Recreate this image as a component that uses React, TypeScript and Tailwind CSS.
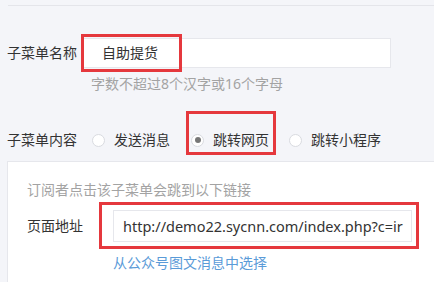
import React from 'react';

const font = { fontFamily: '"Noto Sans", "Noto Sans CJK SC", sans-serif' };

function Radio({ label, checked }: { label: string; checked?: boolean }) {
  return (
    <span className="flex h-5 items-center">
      <span className="flex h-[13px] w-[13px] items-center justify-center rounded-full border border-[#d9dbe0] bg-white">
        {checked && <span className="h-[6px] w-[6px] rounded-full bg-[#777]" />}
      </span>
      <span className="ml-[9px] text-[14px] leading-5 text-[#333]">{label}</span>
    </span>
  );
}

export default function App() {
  return (
    <div className="relative h-[282px] w-[434px] overflow-hidden bg-[#f4f5f9]" style={font}>
      <div className="ml-2 mt-[5px] h-px bg-[#e4e5ea]" />

      {/* name row */}
      <div className="mt-[32px] flex items-center">
        <div className="w-[83px] pl-[7px] text-[14px] leading-5 text-[#333]">子菜单名称</div>
        <div className="relative h-[30px] w-[308px] border border-[#e6e7ec] bg-white pl-[18px] text-[14px] leading-[28px] text-[#333]">
          自助提货
          <div className="absolute left-[-3px] top-[-5px] h-[38px] w-[101px] border-[3px] border-[#e5383d]" />
        </div>
      </div>
      <div className="ml-[91px] mt-[6px] text-[14px] leading-5 text-[#a3a3a3]">字数不超过8个汉字或16个字母</div>

      {/* content type row */}
      <div className="mt-[36px] flex items-center">
        <div className="w-[92px] pl-[7px] text-[14px] leading-5 text-[#333]">子菜单内容</div>
        <Radio label="发送消息" />
        <span className="relative ml-[21px]">
          <Radio label="跳转网页" checked />
          <span className="absolute left-[-5px] top-[-19px] h-[44px] w-[90px] border-[3px] border-[#e5383d]" />
        </span>
        <span className="ml-[20px]">
          <Radio label="跳转小程序" />
        </span>
      </div>

      {/* url panel */}
      <div className="ml-[7px] mt-[11px] h-[140px] w-[440px] border border-[#e6e7ec] bg-white pl-[19px] pt-[18px]">
        <div className="text-[14px] leading-5 text-[#a3a3a3]">订阅者点击该子菜单会跳到以下链接</div>
        <div className="mt-[10px] flex items-center">
          <div className="w-[86px] text-[14px] leading-5 text-[#333]">页面地址</div>
          <div className="relative h-[32px] w-[299px] border border-[#e6e7ec] bg-white pl-[9px]">
            <div className="whitespace-nowrap text-[14.5px] leading-[30px] text-[#333]">
              http://demo22.sycnn.com/index.php?c=ir
            </div>
            <div className="absolute left-[-15px] top-[-9px] h-[47px] w-[320px] border-[3px] border-[#e5383d]" />
          </div>
        </div>
        <div className="ml-[86px] mt-[11px] text-[14px] leading-5 text-[#5a9bd8]">从公众号图文消息中选择</div>
      </div>
    </div>
  );
}
